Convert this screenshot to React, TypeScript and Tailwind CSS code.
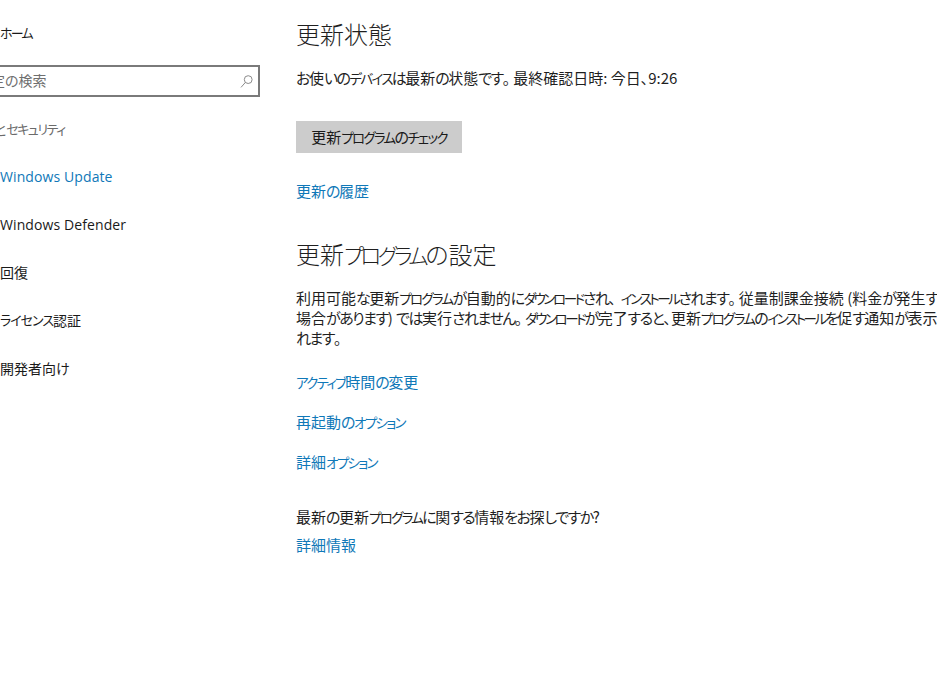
import React from "react";

const font = "font-['Noto_Sans_CJK_JP',sans-serif] [font-feature-settings:'palt']";
const latin = "font-['Open_Sans','Noto_Sans_CJK_JP',sans-serif]";

// the reference sets kana much narrower than kanji, so split text into runs
const Jp = ({ text }: { text: string }) => {
  const runs = text.match(/[ァ-ヶー]+|[ぁ-ん]+|。|[^ァ-ヶーぁ-ん。]+/g) ?? [];
  return (
    <>
      {runs.map((run, i) => {
        if (run === "。") return <span key={i} className="mr-[3px]">{run}</span>;
        if (/ー/.test(run)) return <span key={i} className="text-[13.5px] leading-none tracking-[-2.4px]">{run}</span>;
        if (/[ァ-ヶ]/.test(run)) return <span key={i} className="text-[13.5px] leading-none tracking-[-1.7px]">{run}</span>;
        if (/[ぁ-ん]/.test(run)) return <span key={i} className="tracking-[-1.5px]">{run}</span>;
        return <span key={i}>{run}</span>;
      })}
    </>
  );
};

const SearchIcon = () => (
  <svg width="13" height="13" viewBox="0 0 13 13" fill="none" stroke="#8a8a8a" strokeWidth="1">
    <circle cx="8.2" cy="4.6" r="3.9" />
    <path d="M5.4 7.4 1 12.4" />
  </svg>
);

const Sidebar = () => (
  <div className="w-[260px] shrink-0 pt-2 text-[14px] text-[#1a1a1a]">
    <div className="h-12 flex items-center"><span className="mt-[2px] text-[13px] tracking-[-1.8px]">ホーム</span></div>
    <div className="h-8 mt-[9px] -ml-5 flex items-center justify-between border-2 border-[#7a7a7a] pr-[5px] text-[#6f6f6f]">
      <span className="-ml-[5px] -mt-[2px]">設定の検索</span>
      <SearchIcon />
    </div>
    <div className="h-12 mt-[7px] pt-[2px] -ml-[34px] flex items-center text-[#6b6b6b]">
      更新と<span className="text-[13px] tracking-[-1.5px]">セキュリティ</span>
    </div>
    <div className={`h-12 flex items-center tracking-[0.1px] text-[#0f78b8] ${latin}`}>Windows Update</div>
    <div className={`h-12 flex items-center tracking-[0.1px] ${latin}`}>Windows Defender</div>
    <div className="h-12 flex items-center">回復</div>
    <div className="h-12 flex items-center"><span className="text-[13px] tracking-[-1px]">ライセンス</span>認証</div>
    <div className="h-12 flex items-center">開発者向け</div>
  </div>
);

const TextLink = ({ text, className = "" }: { text: string; className?: string }) => (
  <a className={`block leading-5 text-[#0f78b8] ${className}`}><Jp text={text} /></a>
);

export default function App() {
  return (
    <div className={`w-[937px] h-[684px] overflow-hidden bg-white flex ${font}`}>
      <Sidebar />
      <div className="ml-9 w-[760px] shrink-0 text-[15px] text-[#1f1f1f] pt-[16px]">
        <h1 className="text-[24px] leading-9 font-light">更新状態</h1>
        <p className="mt-[16px] leading-5">
          <Jp text="お使いのデバイスは最新の状態です。最終確認日時: 今日、9:26" />
        </p>
        <button className="mt-[33px] w-[166px] h-8 bg-[#cccccc] text-[#1a1a1a] block">
          <Jp text="更新プログラムのチェック" />
        </button>
        <TextLink className="mt-[28px]" text="更新の履歴" />
        <h2 className="mt-[35px] text-[24px] leading-9 font-light">
          更新<span className="text-[21.5px] leading-none tracking-[-3.4px]">プログラム</span>の設定
        </h2>
        <p className="mt-[16px] leading-5 whitespace-nowrap">
          <span className="block">
            <Jp text="利用可能な更新プログラムが自動的にダウンロードされ、" />
            <span className="ml-[5px]">
              <Jp text="インストールされます。従量制課金接続 (料金が発生する" />
            </span>
          </span>
          <span className="block">
            <Jp text="場合があります) では実行されません。ダウンロードが完了すると、更新プログラムのインストールを促す通知が表示さ" />
          </span>
          <span className="block"><Jp text="れます。" /></span>
        </p>
        <TextLink className="mt-[24px]" text="アクティブ時間の変更" />
        <TextLink className="mt-5" text="再起動のオプション" />
        <TextLink className="mt-5" text="詳細オプション" />
        <p className="mt-[35px] leading-5">
          <Jp text="最新の更新プログラムに関する情報をお探しですか?" />
        </p>
        <TextLink className="mt-2" text="詳細情報" />
      </div>
    </div>
  );
}
